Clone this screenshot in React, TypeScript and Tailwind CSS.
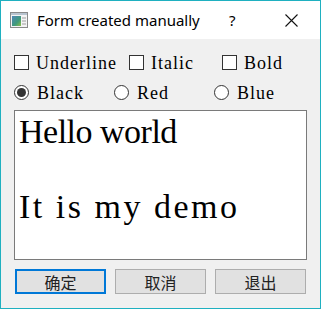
import React from 'react';

const serif = { fontFamily: '"Liberation Serif", "Noto Sans CJK SC", serif' };

const AppIcon: React.FC = () => (
  <svg width="18" height="16" viewBox="0 0 18 16" className="shrink-0">
    <defs>
      <linearGradient id="pane" x1="0" y1="0" x2="1" y2="1">
        <stop offset="0" stopColor="#4f86b8" />
        <stop offset="0.6" stopColor="#3f9a7a" />
        <stop offset="1" stopColor="#8fbf4a" />
      </linearGradient>
    </defs>
    <rect x="0.5" y="0.5" width="17" height="15" fill="#f4f4f4" stroke="#8a8a8a" />
    <rect x="1" y="1" width="16" height="2" fill="#b8c4d0" />
    <rect x="2" y="4" width="9" height="10" fill="url(#pane)" />
    <rect x="12" y="5" width="4" height="2" fill="#c9c9c9" />
    <rect x="12" y="8" width="4" height="2" fill="#c9c9c9" />
    <rect x="12" y="11" width="4" height="2" fill="#c9c9c9" />
  </svg>
);

const Check: React.FC<{ label: string; className?: string }> = ({ label, className }) => (
  <label className={`flex items-center gap-[7px] ${className ?? ''}`}>
    <span className="w-[15px] h-[15px] border border-[#333] bg-white shrink-0" />
    <span className="text-[18px] leading-none tracking-[1px] text-black" style={serif}>{label}</span>
  </label>
);

const Radio: React.FC<{ label: string; checked?: boolean; className?: string }> = ({ label, checked, className }) => (
  <label className={`flex items-center gap-[8px] ${className ?? ''}`}>
    <span className="w-[15px] h-[15px] rounded-full border border-[#333] bg-white shrink-0 flex items-center justify-center">
      {checked && <span className="w-[9px] h-[9px] rounded-full bg-[#333]" />}
    </span>
    <span className="text-[18px] leading-none tracking-[1px] text-black" style={serif}>{label}</span>
  </label>
);

const Btn: React.FC<{ label: string; focused?: boolean }> = ({ label, focused }) => (
  <button
    className={`w-[91px] h-[25px] bg-[#e1e1e1] flex items-center justify-center text-[16px] text-[#222] ${
      focused ? 'border-2 border-[#0078d7]' : 'border border-[#adadad]'
    }`}
    style={{ fontFamily: '"Noto Sans CJK SC", sans-serif' }}
  >
    {label}
  </button>
);

const App: React.FC = () => {
  return (
    <div className="w-[321px] h-[309px] border border-[#1fb0c0] bg-[#f0f0f0] flex flex-col">
      <div className="h-[38px] bg-white flex items-center pl-[9px] shrink-0">
        <AppIcon />
        <span className="ml-[9px] text-[15px] text-black" style={{ fontFamily: '"Noto Sans", sans-serif' }}>
          Form created manually
        </span>
        <span className="ml-auto w-[10px] text-[15px] text-black" style={{ fontFamily: '"Noto Sans", sans-serif' }}>?</span>
        <svg width="13" height="13" viewBox="0 0 13 13" className="ml-[46px] mr-[22px]">
          <path d="M0.5 0.5 L12.5 12.5 M12.5 0.5 L0.5 12.5" stroke="#111" strokeWidth="1.1" />
        </svg>
      </div>
      <div className="flex flex-col px-[13px] pt-[16px]">
        <div className="flex items-center h-[15px]">
          <Check label="Underline" className="w-[115px]" />
          <Check label="Italic" className="w-[93px]" />
          <Check label="Bold" />
        </div>
        <div className="flex items-center h-[15px] mt-[15px]">
          <Radio label="Black" checked className="w-[100px]" />
          <Radio label="Red" className="w-[100px]" />
          <Radio label="Blue" />
        </div>
        <div
          className="mt-[10px] w-[293px] h-[150px] bg-white border border-[#7a7a7a] pl-[4px] pt-[2px] text-[34px] leading-[37.5px] text-black whitespace-pre"
          style={serif}
        >
          <div className="tracking-[-0.5px]">Hello world</div>
          <div>{' '}</div>
          <div className="tracking-[2.5px]">It is my demo</div>
        </div>
        <div className="flex gap-[9px] mt-[9px] pl-[1px]">
          <Btn label="确定" focused />
          <Btn label="取消" />
          <Btn label="退出" />
        </div>
      </div>
    </div>
  );
};

export default App;
